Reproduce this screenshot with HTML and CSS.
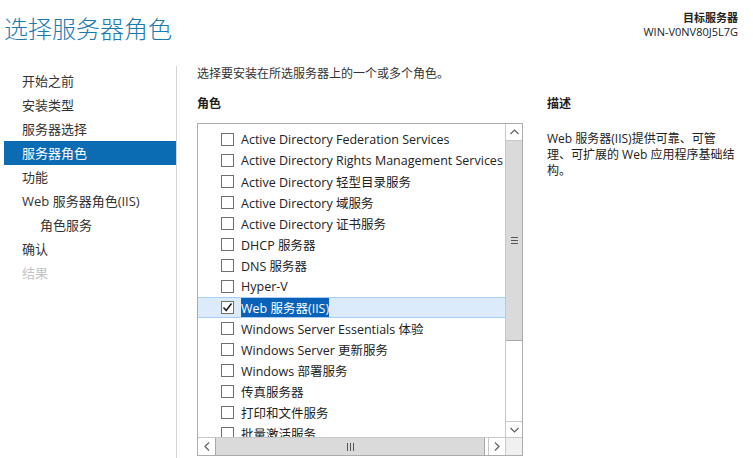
FILE: index.html
```html
<!DOCTYPE html>
<html lang="zh-CN">
<head>
    <meta charset="UTF-8">
    <title>选择服务器角色</title>
    <link rel="stylesheet" href="styles.css">
</head>
<body>
    <!-- 标题栏 -->
    <div class="header">
        <h1 class="page-title">选择服务器角色</h1>
        <div class="target">
            <div class="target-label">目标服务器</div>
            <div class="target-name">WIN-V0NV80J5L7G</div>
        </div>
    </div>

    <div class="main">
        <!-- 左侧步骤 -->
        <ul class="steps">
            <li class="step">开始之前</li>
            <li class="step">安装类型</li>
            <li class="step">服务器选择</li>
            <li class="step active">服务器角色</li>
            <li class="step">功能</li>
            <li class="step">Web 服务器角色(IIS)</li>
            <li class="step sub">角色服务</li>
            <li class="step">确认</li>
            <li class="step disabled">结果</li>
        </ul>

        <!-- 内容 -->
        <div class="content">
            <p class="intro">选择要安装在所选服务器上的一个或多个角色。</p>
            <div class="columns">
                <div class="roles">
                    <div class="section-title">角色</div>
                    <div class="listbox">
                        <ul class="role-list">
                            <li class="role"><span class="check"></span>Active Directory Federation Services</li>
                            <li class="role"><span class="check"></span>Active Directory Rights Management Services</li>
                            <li class="role"><span class="check"></span>Active Directory 轻型目录服务</li>
                            <li class="role"><span class="check"></span>Active Directory 域服务</li>
                            <li class="role"><span class="check"></span>Active Directory 证书服务</li>
                            <li class="role"><span class="check"></span>DHCP 服务器</li>
                            <li class="role"><span class="check"></span>DNS 服务器</li>
                            <li class="role"><span class="check"></span>Hyper-V</li>
                            <li class="role selected">
                                <span class="check">
                                    <svg width="11" height="11" viewBox="0 0 11 11"><path d="M1.5 5.5 L4.2 8.5 L9.5 1.5" fill="none" stroke="#222" stroke-width="1.6"/></svg>
                                </span><span class="hl">Web 服务器(IIS)</span>
                            </li>
                            <li class="role"><span class="check"></span>Windows Server Essentials 体验</li>
                            <li class="role"><span class="check"></span>Windows Server 更新服务</li>
                            <li class="role"><span class="check"></span>Windows 部署服务</li>
                            <li class="role"><span class="check"></span>传真服务器</li>
                            <li class="role"><span class="check"></span>打印和文件服务</li>
                            <li class="role"><span class="check"></span>批量激活服务</li>
                        </ul>

                        <!-- 垂直滚动条 -->
                        <div class="vscroll">
                            <div class="sb-btn">
                                <svg width="9" height="6" viewBox="0 0 9 6"><path d="M0.5 5 L4.5 1 L8.5 5" fill="none" stroke="#606060" stroke-width="1.2"/></svg>
                            </div>
                            <div class="vthumb"><span class="grip-v"></span></div>
                            <div class="vtrack"></div>
                            <div class="sb-btn">
                                <svg width="9" height="6" viewBox="0 0 9 6"><path d="M0.5 1 L4.5 5 L8.5 1" fill="none" stroke="#606060" stroke-width="1.2"/></svg>
                            </div>
                        </div>

                        <!-- 水平滚动条 -->
                        <div class="hscroll">
                            <div class="sb-btn h">
                                <svg width="6" height="9" viewBox="0 0 6 9"><path d="M5 0.5 L1 4.5 L5 8.5" fill="none" stroke="#606060" stroke-width="1.2"/></svg>
                            </div>
                            <div class="hthumb"><span class="grip-h"></span></div>
                            <div class="sb-btn h">
                                <svg width="6" height="9" viewBox="0 0 6 9"><path d="M1 0.5 L5 4.5 L1 8.5" fill="none" stroke="#606060" stroke-width="1.2"/></svg>
                            </div>
                        </div>
                        <div class="corner"></div>
                    </div>
                </div>

                <div class="desc">
                    <div class="section-title">描述</div>
                    <p class="desc-text">Web 服务器(IIS)提供可靠、可管<br>理、可扩展的 Web 应用程序基础结构。</p>
                </div>
            </div>
        </div>
    </div>
</body>
</html>
```

FILE: styles.css
```css
/* 全局 */
* {
    margin: 0;
    padding: 0;
    box-sizing: border-box;
}

body {
    width: 753px;
    height: 458px;
    overflow: hidden;
    background: #fff;
    color: #1e1e1e;
    font-family: "Open Sans", "Noto Sans CJK SC", sans-serif;
    font-size: 12px;
}

ul {
    list-style: none;
}

/* 标题栏 */
.header {
    height: 66px;
    display: flex;
    justify-content: space-between;
    align-items: flex-start;
}

.page-title {
    font-family: "Noto Sans CJK SC", sans-serif;
    font-weight: 300;
    font-size: 24px;
    line-height: 30px;
    color: #1a7bb0;
    padding: 13px 0 0 4px;
}

.target {
    text-align: right;
    padding: 11px 15px 0 0;
    font-size: 11px;
    color: #222;
}

.target-label {
    font-weight: bold;
    line-height: 14px;
}

.target-name {
    line-height: 13px;
}

/* 主体 */
.main {
    display: flex;
    height: 392px;
}

/* 左侧步骤 */
.steps {
    width: 177px;
    padding: 3px 0 0 4px;
    border-right: 1px solid #d4d4d4;
    font-size: 13px;
}

.step {
    height: 24px;
    line-height: 24px;
    padding-left: 18px;
    color: #333;
}

.step.sub {
    padding-left: 36px;
}

.step.active {
    background: #0b6cb3;
    color: #fff;
}

.step.disabled {
    color: #c4c4c4;
}

/* 内容 */
.content {
    flex: 1;
    padding-left: 20px;
}

.intro {
    line-height: 16px;
    color: #333;
}

.columns {
    display: flex;
    gap: 24px;
    margin-top: 14px;
}

.section-title {
    font-weight: bold;
    line-height: 16px;
}

/* 列表框 */
.listbox {
    margin-top: 11px;
    width: 326px;
    height: 333px;
    border: 1px solid #acacac;
    display: grid;
    grid-template-columns: 1fr 17px;
    grid-template-rows: 1fr 18px;
    overflow: hidden;
}

.role-list {
    padding-top: 5px;
    overflow: hidden;
    font-size: 12.5px;
}

.role {
    height: 21px;
    display: flex;
    align-items: center;
    padding-left: 23px;
    white-space: nowrap;
    color: #222;
}

.check {
    width: 13px;
    height: 13px;
    border: 1px solid #707070;
    background: #fff;
    margin-right: 7px;
    display: flex;
    align-items: center;
    justify-content: center;
    flex-shrink: 0;
}

.role.selected {
    background: #dcebfc;
    border-top: 1px solid #a8cdf2;
    border-bottom: 1px solid #a8cdf2;
}

.hl {
    background: #0a62b8;
    color: #fff;
}

/* 滚动条 */
.vscroll {
    display: flex;
    flex-direction: column;
    border-left: 1px solid #c8c8c8;
    background: #fff;
}

.sb-btn {
    height: 17px;
    display: flex;
    align-items: center;
    justify-content: center;
    background: #fff;
    border-bottom: 1px solid #c8c8c8;
}

.vscroll .sb-btn:last-child {
    border-top: 1px solid #c8c8c8;
    border-bottom: none;
    height: 16px;
}

.vthumb {
    height: 200px;
    background: #dadada;
    border-bottom: 1px solid #a8a8a8;
    display: flex;
    align-items: center;
    justify-content: center;
}

.grip-v {
    width: 7px;
    height: 7px;
    border-top: 1px solid #555;
    border-bottom: 1px solid #555;
    background: linear-gradient(#555, #555) center / 7px 1px no-repeat;
}

.vtrack {
    flex: 1;
}

.hscroll {
    display: flex;
    border-top: 1px solid #c8c8c8;
}

.sb-btn.h {
    width: 17px;
    height: auto;
    border-bottom: none;
}

.sb-btn.h:last-child {
    border-left: 1px solid #c8c8c8;
}

.hthumb {
    flex: 1;
    margin-right: 3px;
    background: #dadada;
    border-left: 1px solid #a8a8a8;
    border-right: 1px solid #a8a8a8;
    display: flex;
    align-items: center;
    justify-content: center;
}

.grip-h {
    width: 7px;
    height: 8px;
    border-left: 1px solid #555;
    border-right: 1px solid #555;
    background: linear-gradient(#555, #555) center / 1px 8px no-repeat;
}

.corner {
    background: #f0f0f0;
    border-top: 1px solid #c8c8c8;
    border-left: 1px solid #c8c8c8;
}

/* 描述 */
.desc {
    width: 200px;
}

.desc-text {
    margin-top: 19px;
    line-height: 16px;
    color: #222;
}
```
